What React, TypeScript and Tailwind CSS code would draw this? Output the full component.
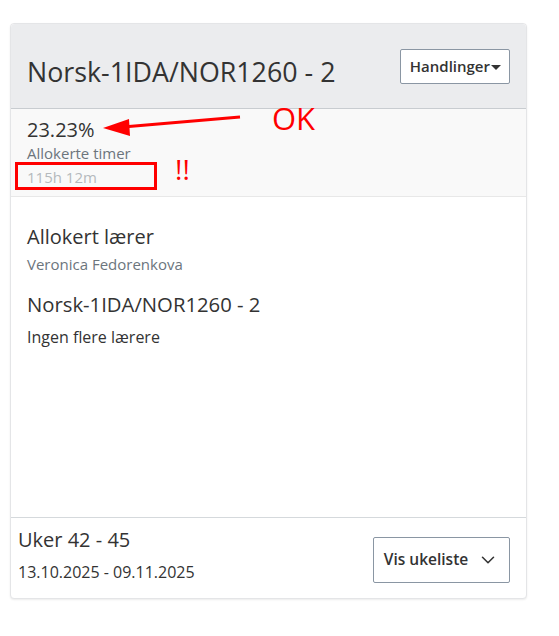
import { ChevronDown } from "lucide-react";

export default function App() {
  return (
    <div className="min-h-[636px] bg-white pt-[23px] pl-[10px] font-['Open_Sans',sans-serif] text-[#333]">
      <div className="relative w-[517px] rounded border border-[#e4e5e7] bg-white shadow-[0_1px_2px_rgba(0,0,0,0.08)]">
        {/* header */}
        <div className="flex h-[85px] items-center justify-between rounded-t border-b border-[#c8ccd0] bg-[#ebecee] pl-[16px] pr-[16px]">
          <h1 className="pt-[12px] text-[26.8px] leading-none text-[#333]">Norsk-1IDA/NOR1260 - 2</h1>
          <button className="flex h-[35px] items-center rounded-[2px] border border-[#8a96a3] bg-white pl-[9px] pr-[8px] text-[15px] font-semibold text-[#333]">
            Handlinger
            <span className="ml-[1px] mt-[2px] h-0 w-0 border-x-[5px] border-t-[5px] border-x-transparent border-t-[#333]" />
          </button>
        </div>

        {/* stats */}
        <div className="relative h-[88px] border-b border-[#e8e8e8] bg-[#f9f9f9] pl-[16px] pt-[8px]">
          <div className="text-[20px] leading-[26px] text-[#333]">23.23%</div>
          <div className="text-[15px] leading-[21px] text-[#6c757d]">Allokerte timer</div>
          <div className="mt-[2px] text-[15px] leading-[22px] text-[#b5b9bd]">115h 12m</div>

          <div className="absolute left-[4px] top-[53px] h-[28px] w-[142px] border-[3px] border-[#f00]" />
          <div className="absolute left-[164px] top-[46px] text-[28px] leading-none text-[#f00]">!!</div>
          <div className="absolute left-[261px] top-[-6px] text-[31px] leading-none text-[#f00]">OK</div>
          <svg className="absolute left-[90px] top-[0px]" width="160" height="30" viewBox="0 0 160 30">
            <line x1="139" y1="8" x2="22" y2="18" stroke="#f00" strokeWidth="3" />
            <polygon points="2,19 28,10 29,27" fill="#f00" />
          </svg>
        </div>

        {/* body */}
        <div className="h-[321px] border-b border-[#d5d9dc] px-[16px] pt-[27px]">
          <div className="text-[20px] leading-[26px]">Allokert lærer</div>
          <div className="mt-[4px] text-[15px] leading-[20px] text-[#6c757d]">Veronica Fedorenkova</div>
          <div className="mt-[17px] text-[20.3px] leading-[26px]">Norsk-1IDA/NOR1260 - 2</div>
          <div className="mt-[9px] text-[16px] leading-[22px]">Ingen flere lærere</div>
        </div>

        {/* footer */}
        <div className="flex items-center justify-between pb-[15px] pl-[7px] pr-[16px] pt-[8px]">
          <div>
            <div className="text-[20px] leading-[28px]">Uker 42 - 45</div>
            <div className="mt-[7px] text-[16px] leading-[22px]">13.10.2025 - 09.11.2025</div>
          </div>
          <button className="mt-[10px] flex h-[46px] w-[137px] items-center justify-center gap-[9px] rounded-[2px] border border-[#8a96a3] bg-white text-[15.5px] font-semibold text-[#333]">
            Vis ukeliste
            <ChevronDown size={22} strokeWidth={1.7} />
          </button>
        </div>
      </div>
    </div>
  );
}
